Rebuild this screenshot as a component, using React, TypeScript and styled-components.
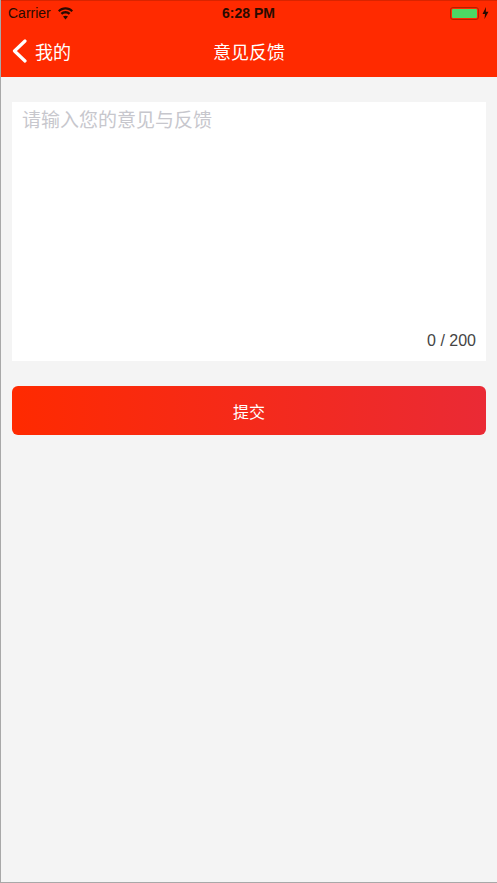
import { createGlobalStyle } from "styled-components";
import styled from "styled-components";

const GlobalStyle = createGlobalStyle`
  html, body {
    margin: 0;
    padding: 0;
    background: #f4f4f4;
  }
  * {
    box-sizing: border-box;
  }
`;

const Page = styled.div`
  width: 497px;
  height: 883px;
  background: #f4f4f4;
  border-left: 1px solid #a8a8a8;
  border-bottom: 1px solid #a8a8a8;
  font-family: "Liberation Sans", "Noto Sans CJK SC", sans-serif;
  overflow: hidden;
`;

const Header = styled.header`
  height: 77px;
  background: #ff2a00;
  border-top: 1px solid #d92400;
`;

const StatusBar = styled.div`
  height: 24px;
  padding: 0 8px 0 7px;
  display: grid;
  grid-template-columns: 1fr auto 1fr;
  align-items: center;
  color: #2a0a00;
  font-size: 14px;
`;

const StatusLeft = styled.div`
  display: flex;
  align-items: center;
  gap: 6px;
`;

const Clock = styled.div`
  font-weight: 700;
  font-size: 14px;
`;

const StatusRight = styled.div`
  display: flex;
  justify-content: flex-end;
  align-items: center;
  gap: 3px;
`;

const Battery = styled.div`
  width: 29px;
  height: 13px;
  border: 1.5px solid #b52000;
  border-radius: 3px;
  padding: 1px;
  display: flex;
`;

const BatteryFill = styled.div`
  flex: 1;
  background: #4cd964;
  border-radius: 1px;
`;

const NavBar = styled.div`
  height: 51px;
  padding: 0 11px;
  display: grid;
  grid-template-columns: 1fr auto 1fr;
  align-items: center;
  color: #fff;
`;

const BackLink = styled.div`
  display: flex;
  align-items: center;
  gap: 8px;
  font-size: 18px;
`;

const NavTitle = styled.div`
  font-size: 18px;
`;

const Content = styled.main`
  padding: 25px 11px 0;
`;

const Feedback = styled.div`
  height: 259px;
  background: #fff;
  padding: 8px 10px 10px;
  display: flex;
  flex-direction: column;
  justify-content: space-between;
`;

const Placeholder = styled.div`
  color: #c7c7cd;
  font-size: 19px;
  line-height: 22px;
`;

const Counter = styled.div`
  align-self: flex-end;
  color: #444;
  font-size: 16px;
  line-height: 20px;
`;

const SubmitButton = styled.button`
  display: block;
  width: 100%;
  height: 49px;
  margin-top: 25px;
  border: none;
  border-radius: 6px;
  background: linear-gradient(90deg, #ff2a00, #ea2a35);
  color: #fff;
  font-family: inherit;
  font-size: 16px;
`;

export default function App() {
  return (
    <Page>
      <GlobalStyle />
      <Header>
        <StatusBar>
          <StatusLeft>
            <span>Carrier</span>
            <svg width="17" height="13" viewBox="0 0 17 13" fill="#2a0a00">
              <path d="M8.5 2.6c2.3 0 4.4.9 6 2.4l1.5-1.6C14 1.4 11.400.3 8.500.3S3 1.400 1 3.400L2.500 5c1.600-1.500 3.700-2.400 6-2.400z" />
              <path d="M8.500 6.400c1.300 0 2.400.5 3.300 1.300l1.600-1.600c-1.300-1.200-3-2-4.900-2s-3.600.8-4.900 2l1.600 1.600c.9-.8 2-1.300 3.300-1.300z" />
              <path d="M8.500 12.500l2.500-2.900c-.7-.6-1.500-.9-2.500-.9s-1.800.3-2.500.9z" />
            </svg>
          </StatusLeft>
          <Clock>6:28 PM</Clock>
          <StatusRight>
            <Battery>
              <BatteryFill />
            </Battery>
            <svg width="7" height="12" viewBox="0 0 7 12" fill="#2a0a00">
              <path d="M4 0L0.500 7h2.500L2.500 12 6.500 4.800H3.800z" />
            </svg>
          </StatusRight>
        </StatusBar>
        <NavBar>
          <BackLink>
            <svg width="15" height="24" viewBox="0 0 15 24" fill="none" stroke="#fff" strokeWidth="3.200" strokeLinecap="round" strokeLinejoin="round">
              <path d="M13 2L2.500 12 13 22" />
            </svg>
            <span>我的</span>
          </BackLink>
          <NavTitle>意见反馈</NavTitle>
          <span />
        </NavBar>
      </Header>
      <Content>
        <Feedback>
          <Placeholder>请输入您的意见与反馈</Placeholder>
          <Counter>0 / 200</Counter>
        </Feedback>
        <SubmitButton>提交</SubmitButton>
      </Content>
    </Page>
  );
}
